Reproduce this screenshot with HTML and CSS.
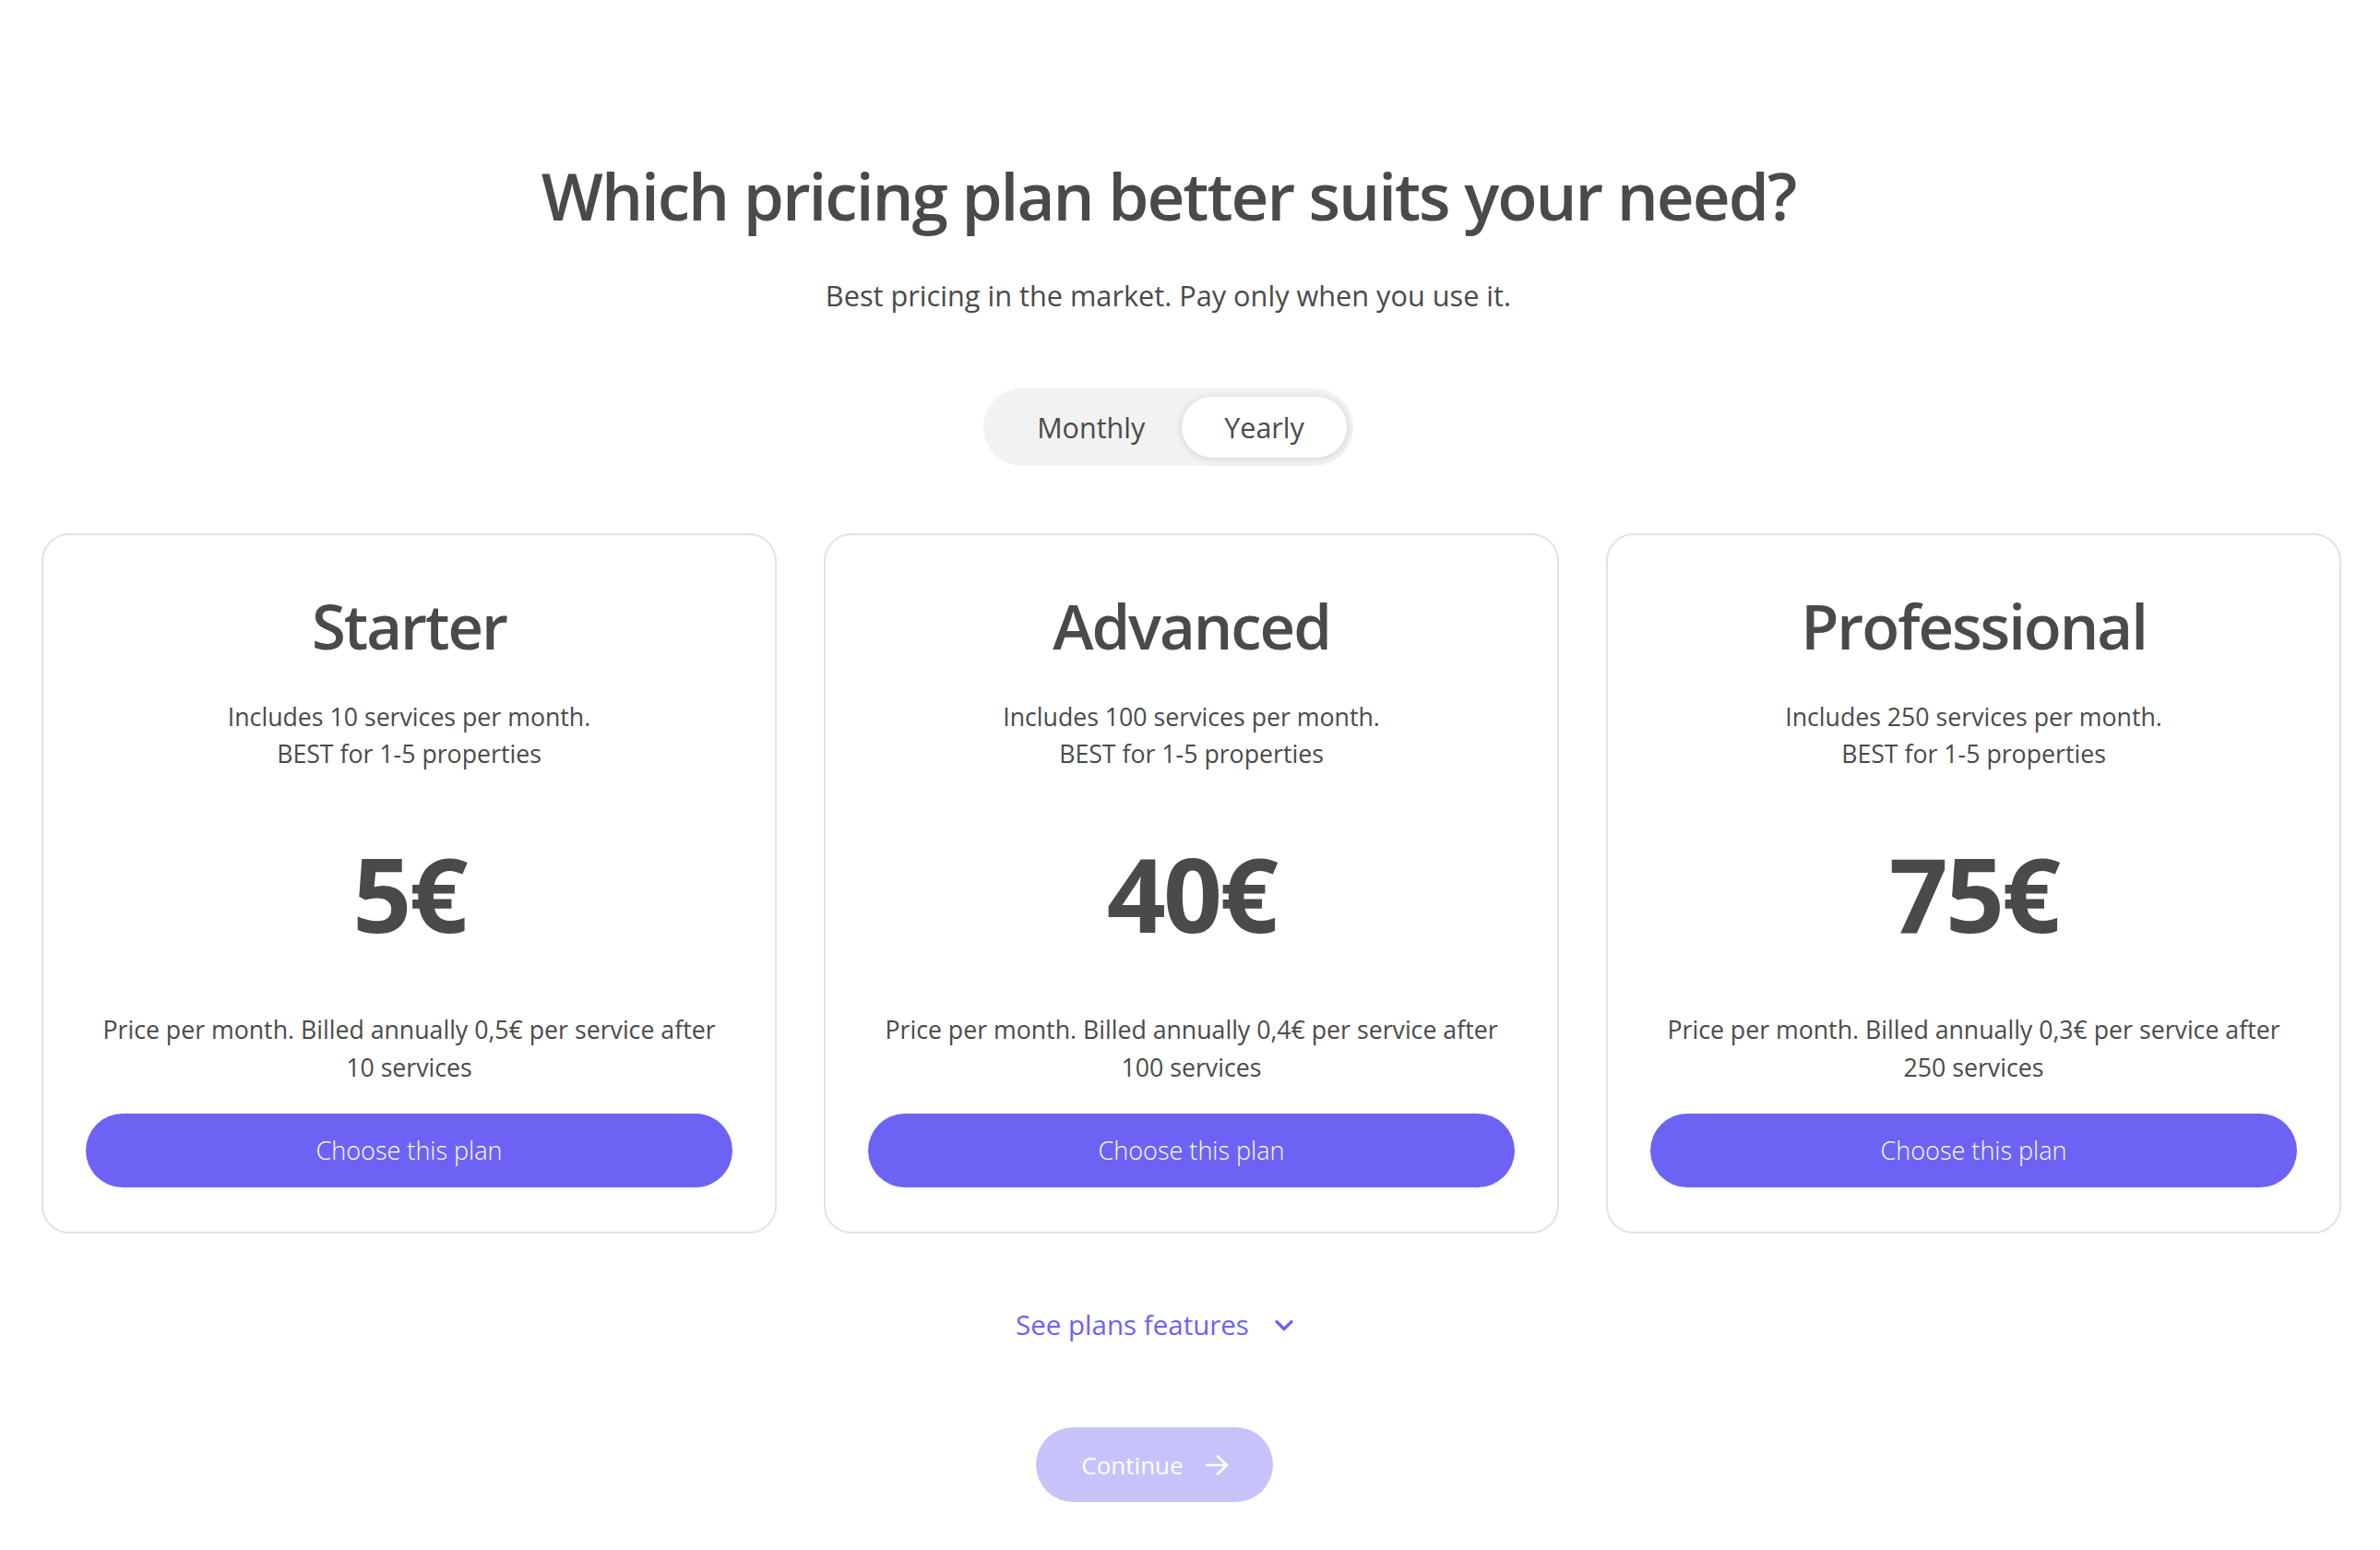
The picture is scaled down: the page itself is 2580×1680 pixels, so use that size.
FILE: index.html
```html
<!DOCTYPE html>
<html lang="en">
<head>
<meta charset="utf-8">
<title>Pricing plans</title>
<link rel="stylesheet" href="styles.css">
</head>
<body>
<main class="page">
  <header class="intro">
    <h1 class="intro-title">Which pricing plan better suits your need?</h1>
    <p class="intro-sub">Best pricing in the market. Pay only when you use it.</p>
    <div class="toggle">
      <button class="toggle-opt">Monthly</button>
      <button class="toggle-opt is-active">Yearly</button>
    </div>
  </header>

  <section class="plans">
    <article class="plan">
      <h2 class="plan-name">Starter</h2>
      <p class="plan-desc">Includes 10 services per month.<br>BEST for 1-5 properties</p>
      <div class="plan-price">5€</div>
      <p class="plan-note">Price per month. Billed annually 0,5€ per service after 10 services</p>
      <button class="plan-btn">Choose this plan</button>
    </article>
    <article class="plan">
      <h2 class="plan-name">Advanced</h2>
      <p class="plan-desc">Includes 100 services per month.<br>BEST for 1-5 properties</p>
      <div class="plan-price">40€</div>
      <p class="plan-note">Price per month. Billed annually 0,4€ per service after 100 services</p>
      <button class="plan-btn">Choose this plan</button>
    </article>
    <article class="plan">
      <h2 class="plan-name">Professional</h2>
      <p class="plan-desc">Includes 250 services per month.<br>BEST for 1-5 properties</p>
      <div class="plan-price">75€</div>
      <p class="plan-note">Price per month. Billed annually 0,3€ per service after 250 services</p>
      <button class="plan-btn">Choose this plan</button>
    </article>
  </section>

  <footer class="actions">
    <button class="features-link">
      <span>See plans features</span>
      <svg class="chevron" width="20" height="13" viewBox="0 0 20 13" aria-hidden="true"><polyline points="2,2.5 10,10.5 18,2.5" fill="none" stroke="#6c63f5" stroke-width="3.2" stroke-linecap="round" stroke-linejoin="round"/></svg>
    </button>
    <button class="continue-btn">
      <span>Continue</span>
      <svg class="arrow" width="28" height="28" viewBox="0 0 28 28" aria-hidden="true"><path d="M3 14 H25 M15 4.5 L25 14 L15 23.5" fill="none" stroke="#ffffff" stroke-width="2.6" stroke-linecap="round" stroke-linejoin="round"/></svg>
    </button>
  </footer>
</main>
</body>
</html>
```

FILE: styles.css
```css
* { box-sizing: border-box; }

html, body {
  margin: 0;
  padding: 0;
  background: #ffffff;
}

body {
  font-family: "Open Sans", "Noto Sans", "Liberation Sans", sans-serif;
  color: #4a4a4a;
}

button {
  font-family: inherit;
  border: none;
  cursor: pointer;
}

.page {
  padding: 167px 42px 0 45px;
}

/* Intro */
.intro {
  display: flex;
  flex-direction: column;
  align-items: center;
  padding-right: 50px;
}

.intro-title {
  margin: 0;
  font-size: 71px;
  line-height: 90px;
  font-weight: 600;
  letter-spacing: -0.028em;
  color: #4a4a4a;
}

.intro-sub {
  margin: 43px 0 0;
  font-size: 30.7px;
  line-height: 40px;
  font-weight: 400;
  color: #4a4a4a;
}

.toggle {
  margin-top: 81px;
  display: flex;
  padding: 9px 7px 9px 8px;
  background: #f2f2f2;
  border-radius: 42px;
}

.toggle-opt {
  height: 66px;
  padding: 0 40px 0 50px;
  font-size: 30.5px;
  line-height: 40px;
  color: #4a4a4a;
  background: transparent;
  border-radius: 33px;
}

.toggle-opt.is-active {
  padding: 0 46px;
  background: #ffffff;
  box-shadow: 0 1px 8px rgba(0, 0, 0, 0.14);
}

/* Plans */
.plans {
  margin-top: 73px;
  display: grid;
  grid-template-columns: repeat(3, 1fr);
  column-gap: 51px;
}

.plan {
  display: flex;
  flex-direction: column;
  align-items: center;
  text-align: center;
  padding: 56px 46px 48px;
  border: 2px solid #e3e3e3;
  border-radius: 30px;
  background: #ffffff;
}

.plan-name {
  margin: 0;
  font-size: 67px;
  line-height: 84px;
  font-weight: 600;
  letter-spacing: -0.03em;
  color: #4a4a4a;
}

.plan-desc {
  margin: 37px 0 0;
  font-size: 26.7px;
  line-height: 40px;
  color: #4a4a4a;
}

.plan-price {
  margin-top: 64px;
  font-size: 112px;
  line-height: 134px;
  font-weight: 700;
  letter-spacing: -0.025em;
  color: #4a4a4a;
}

.plan-note {
  margin: 60px 0 0;
  font-size: 26.7px;
  line-height: 41px;
  color: #4a4a4a;
}

.plan-btn {
  margin-top: 30px;
  width: 100%;
  height: 80px;
  display: flex;
  align-items: center;
  justify-content: center;
  background: #6c63f5;
  color: #ffffff;
  font-size: 27px;
  line-height: 40px;
  font-weight: 300;
  border-radius: 40px;
}

/* Actions */
.actions {
  display: flex;
  flex-direction: column;
  align-items: center;
  padding-right: 80px;
}

.features-link {
  margin-top: 79px;
  display: flex;
  align-items: center;
  gap: 28px;
  padding: 0;
  background: transparent;
  color: #6c63f5;
  font-size: 29.5px;
  line-height: 40px;
}

.chevron { display: block; }

.continue-btn {
  margin-top: 91px;
  height: 81px;
  display: flex;
  align-items: center;
  gap: 22px;
  padding: 0 47px 0 49px;
  background: #c7c3fa;
  color: #ffffff;
  font-size: 26px;
  line-height: 40px;
  font-weight: 400;
  border-radius: 41px;
}

.arrow { display: block; }
```
